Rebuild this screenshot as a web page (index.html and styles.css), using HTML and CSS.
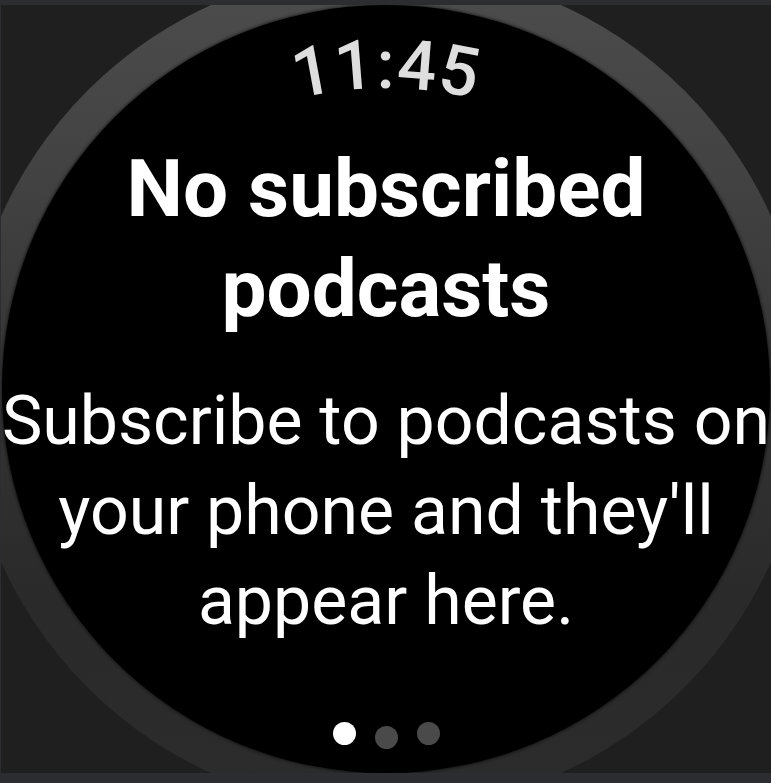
FILE: index.html
```html
<!DOCTYPE html>
<html lang="en">
<head>
<meta charset="utf-8">
<title>No subscribed podcasts</title>
<link rel="stylesheet" href="styles.css">
</head>
<body>
<div class="device">
  <div class="bezel">
    <div class="screen">
      <svg class="clock" width="768" height="110" viewBox="0 0 768 110">
        <defs><path id="arc" d="M 234 113.9 A 380 380 0 0 1 534 113.9"/></defs>
        <text class="clock-text"><textPath href="#arc" startOffset="50%" text-anchor="middle">11:45</textPath></text>
      </svg>
      <h1 class="title">No subscribed<br>podcasts</h1>
      <p class="message">Subscribe to podcasts on<br>your phone and they'll<br>appear here.</p>
      <div class="dots">
        <span class="dot dot-active"></span>
        <span class="dot dot-mid"></span>
        <span class="dot"></span>
      </div>
    </div>
  </div>
</div>
</body>
</html>
```
FILE: styles.css
```css
html, body {
  margin: 0;
  padding: 0;
}
body {
  width: 771px;
  height: 783px;
  background: #2b2d30;
  overflow: hidden;
}
.device {
  width: 770px;
  height: 768px;
  margin: 5px 0 0 1px;
  background: #1f1f1f;
  overflow: hidden;
  display: flex;
  align-items: center;
  justify-content: center;
}
.bezel {
  flex-shrink: 0;
  width: 844px;
  height: 844px;
  border-radius: 50%;
  background: linear-gradient(to bottom, #4d4d4d 0%, #424242 25%, #343434 50%, #2a2a2a 75%, #2c2c2c 100%);
  display: flex;
  align-items: center;
  justify-content: center;
}
.screen {
  flex-shrink: 0;
  width: 768px;
  height: 768px;
  border-radius: 50%;
  background: #000;
  box-shadow: 0 0 3px 1px rgba(0, 0, 0, 0.55);
  display: flex;
  flex-direction: column;
  align-items: center;
  font-family: Roboto, "Noto Sans", sans-serif;
}
.clock {
  display: block;
  flex-shrink: 0;
}
.clock-text {
  font-family: Roboto, sans-serif;
  font-size: 69px;
  font-weight: 500;
  letter-spacing: 1px;
  fill: #dedede;
}
.title {
  margin: 24px 0 0;
  font-size: 80px;
  line-height: 100px;
  font-weight: 700;
  color: #fff;
  text-align: center;
  white-space: nowrap;
}
.message {
  margin: 37px 0 0;
  font-size: 68px;
  line-height: 90px;
  font-weight: 400;
  color: #fff;
  text-align: center;
  white-space: nowrap;
}
.dots {
  margin-top: 76px;
  display: flex;
  align-items: flex-start;
  gap: 19px;
}
.dot {
  width: 23px;
  height: 23px;
  border-radius: 50%;
  background: #4a4a4a;
}
.dot-active {
  background: #fff;
}
.dot-mid {
  margin-top: 4px;
}
```
